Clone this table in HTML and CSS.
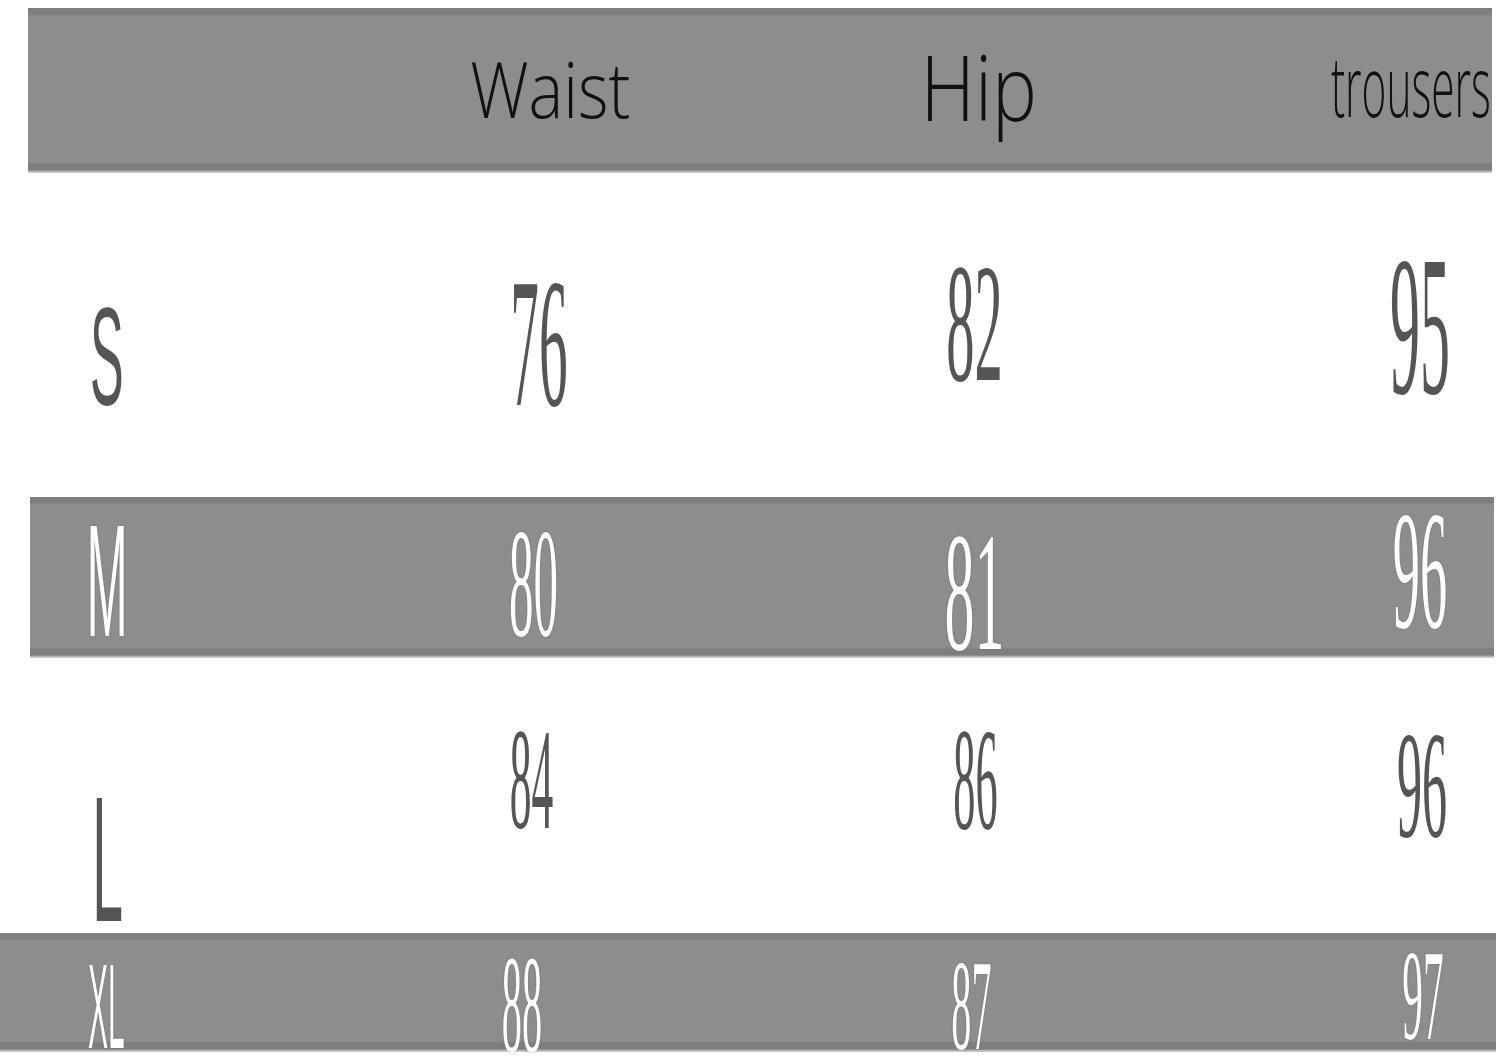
FILE: index.html
```html
<!DOCTYPE html>
<html lang="en">
<head>
<meta charset="utf-8">
<title>Size chart</title>
<link rel="stylesheet" href="styles.css">
</head>
<body>
<div class="sheet">
  <div class="row band band-head">
    <div class="cell"></div>
    <div class="cell"><span class="t head h-waist">Waist</span></div>
    <div class="cell"><span class="t head h-hip">Hip</span></div>
    <div class="cell"><span class="t head h-trousers">trousers</span></div>
  </div>
  <div class="row row-s">
    <div class="cell"><span class="t size dark s-s">S</span></div>
    <div class="cell"><span class="t num dark s-w">76</span></div>
    <div class="cell"><span class="t num dark s-h">82</span></div>
    <div class="cell"><span class="t num dark s-t">95</span></div>
  </div>
  <div class="row band band-m">
    <div class="cell"><span class="t size light m-s">M</span></div>
    <div class="cell"><span class="t num light m-w">80</span></div>
    <div class="cell"><span class="t num light m-h">81</span></div>
    <div class="cell"><span class="t num light m-t">96</span></div>
  </div>
  <div class="row row-l">
    <div class="cell"><span class="t size dark l-s">L</span></div>
    <div class="cell"><span class="t num dark l-w">84</span></div>
    <div class="cell"><span class="t num dark l-h">86</span></div>
    <div class="cell"><span class="t num dark l-t">96</span></div>
  </div>
  <div class="row band band-xl">
    <div class="cell"><span class="t size light xl-s">XL</span></div>
    <div class="cell"><span class="t num light xl-w">88</span></div>
    <div class="cell"><span class="t num light xl-h">87</span></div>
    <div class="cell"><span class="t num light xl-t">97</span></div>
  </div>
</div>
</body>
</html>
```

FILE: styles.css
```css
html, body {
  margin: 0;
  padding: 0;
  background: #ffffff;
  overflow: hidden;
}

.sheet {
  width: 1500px;
  height: 1059px;
  padding-top: 8px;
  box-sizing: border-box;
}

.row {
  display: grid;
  grid-template-columns: 107px 428px 440px 445px;
}

.band {
  background-image: linear-gradient(
    #7e7d7f 0,
    #7e7d7f 6px,
    #8e8c8f 8px,
    #8e8c8f calc(100% - 11px),
    #7e7d7f calc(100% - 9px),
    #7e7d7f calc(100% - 3px),
    #c8c8c8 calc(100% - 1px)
  );
  background-repeat: no-repeat;
}

.band-head {
  height: 165px;
  background-position: 28px 0;
  background-size: 1464px 100%;
}

.row-s {
  height: 324px;
}

.band-m {
  height: 161px;
  background-position: 30px 0;
  background-size: 1464px 100%;
}

.row-l {
  height: 275px;
}

.band-xl {
  height: 119px;
  background-position: 0 0;
  background-size: 1496px 100%;
}

.cell {
  justify-self: end;
  width: 0;
  display: flex;
  justify-content: center;
  align-items: flex-start;
}

.t {
  display: block;
  white-space: nowrap;
  line-height: 1;
  transform-origin: 50% 0;
}

.band-xl .t {
  line-height: 0.75;
}

.head {
  font-family: "Open Sans", "Noto Sans", sans-serif;
  font-weight: 300;
  color: #111111;
}

.num {
  font-family: "Liberation Serif", serif;
}

.size {
  font-family: "Liberation Sans", sans-serif;
}

.dark {
  color: #555555;
}

.light {
  color: #ffffff;
  text-shadow: 0 0 2px rgba(50, 50, 50, 0.7);
}

/* header */
.h-waist { font-size: 77px; margin-top: 42px; transform: translateX(15px) scaleX(0.85); }
.h-hip { font-size: 90px; margin-top: 33px; transform: translateX(3.5px) scaleX(0.84); }
.h-trousers { font-size: 84px; margin-top: 35px; transform: translateX(-9.5px) scaleX(0.505); }

/* S row */
.s-s { font-size: 140px; margin-top: 114px; transform: scaleX(0.36); }
.s-w { font-size: 185px; margin-top: 77px; transform: translateX(3.5px) scaleX(0.31); }
.s-h { font-size: 169px; margin-top: 66px; transform: translateX(-1px) scaleX(0.334); }
.s-t { font-size: 200px; margin-top: 53px; transform: scaleX(0.3); }

/* M row */
.m-s { font-size: 160px; margin-top: 4px; transform: translateX(0.5px) scaleX(0.31); }
.m-w { font-size: 154px; margin-top: 9px; transform: translateX(-1.5px) scaleX(0.318); }
.m-h { font-size: 170px; margin-top: 10px; transform: translateX(-0.5px) scaleX(0.353); }
.m-t { font-size: 170px; margin-top: -12px; transform: scaleX(0.32); }

/* L row */
.l-s { font-size: 179px; margin-top: 112px; transform: translateX(1px) scaleX(0.31); }
.l-w { font-size: 145px; margin-top: 49px; transform: translateX(-4px) scaleX(0.3); }
.l-h { font-size: 146px; margin-top: 49px; transform: translateX(0.5px) scaleX(0.304); }
.l-t { font-size: 152px; margin-top: 52px; transform: translateX(2px) scaleX(0.33); }

/* XL row */
.xl-s { font-size: 120px; margin-top: 28px; transform: translateX(-1px) scaleX(0.25); }
.xl-w { font-size: 139px; margin-top: 20px; transform: translateX(-13.5px) scaleX(0.29); }
.xl-h { font-size: 130px; margin-top: 24px; transform: translateX(-3.5px) scaleX(0.31); }
.xl-t { font-size: 130px; margin-top: 14px; transform: translateX(3px) scaleX(0.318); }
```
